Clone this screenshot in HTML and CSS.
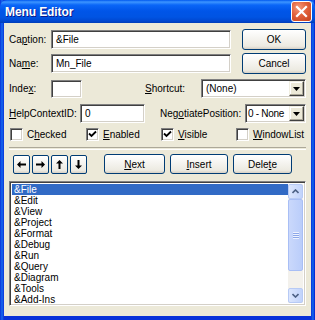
FILE: index.html
```html
<!DOCTYPE html>
<html>
<head>
<meta charset="utf-8">
<link rel="stylesheet" href="styles.css">
</head>
<body>
<div class="win">
  <div class="titlebar">
    <span class="title">Menu Editor</span>
    <span class="close"><svg width="21" height="21" viewBox="0 0 21 21"><path d="M6 6 L15 15 M15 6 L6 15" stroke="#fff" stroke-width="2.2" stroke-linecap="square"/></svg></span>
  </div>
  <div class="client">
    <div class="row r1">
      <span class="lbl w42">Ca<u>p</u>tion:</span>
      <span class="field fw180">&amp;File</span>
      <span class="btn bw64 push">OK</span>
    </div>
    <div class="row r2">
      <span class="lbl w42">Na<u>m</u>e:</span>
      <span class="field fw180">Mn_File</span>
      <span class="btn bw64 push">Cancel</span>
    </div>
    <div class="row r3">
      <span class="lbl w42">Inde<u>x</u>:</span>
      <span class="field fw31"></span>
      <span class="lbl w56 ml63"><u>S</u>hortcut:</span>
      <span class="combo cw105"><span class="ctext">(None)</span><span class="drop"><svg width="7" height="4" viewBox="0 0 7 4"><path d="M0 0 H7 L3.5 4 Z" fill="#000"/></svg></span></span>
    </div>
    <div class="row r4">
      <span class="lbl w71"><u>H</u>elpContextID:</span>
      <span class="field fw65">0</span>
      <span class="lbl w85 ml15">Neg<u>o</u>tiatePosition:</span>
      <span class="combo cw61"><span class="ctext tight">0 - None</span><span class="drop"><svg width="7" height="4" viewBox="0 0 7 4"><path d="M0 0 H7 L3.5 4 Z" fill="#000"/></svg></span></span>
    </div>
    <div class="row r5">
      <span class="chk cw76"><span class="box"></span><span>C<u>h</u>ecked</span></span>
      <span class="chk cw75"><span class="box"><svg width="9" height="9" viewBox="0 0 9 9"><path d="M1 3.5 L3.5 6 L8 1.5" fill="none" stroke="#000" stroke-width="1.8"/></svg></span><span><u>E</u>nabled</span></span>
      <span class="chk cw75"><span class="box"><svg width="9" height="9" viewBox="0 0 9 9"><path d="M1 3.5 L3.5 6 L8 1.5" fill="none" stroke="#000" stroke-width="1.8"/></svg></span><span><u>V</u>isible</span></span>
      <span class="chk"><span class="box"></span><span><u>W</u>indowList</span></span>
    </div>
    <div class="sep"></div>
    <div class="row r6">
      <div class="arrows">
        <span class="btn abtn"><svg width="9" height="7" viewBox="0 0 9 7"><path d="M0 3.5 L3.5 0 V2.5 H9 V4.5 H3.5 V7 Z" fill="#000"/></svg></span>
        <span class="btn abtn"><svg width="9" height="7" viewBox="0 0 9 7"><path d="M9 3.5 L5.5 0 V2.5 H0 V4.5 H5.5 V7 Z" fill="#000"/></svg></span>
        <span class="btn abtn"><svg width="7" height="9" viewBox="0 0 7 9"><path d="M3.5 0 L7 3.5 H4.5 V9 H2.5 V3.5 H0 Z" fill="#000"/></svg></span>
        <span class="btn abtn"><svg width="7" height="9" viewBox="0 0 7 9"><path d="M3.5 9 L7 5.5 H4.5 V0 H2.5 V5.5 H0 Z" fill="#000"/></svg></span>
      </div>
      <div class="actions">
        <span class="btn bw61"><u>N</u>ext</span>
        <span class="btn bw58"><u>I</u>nsert</span>
        <span class="btn bw59">Dele<u>t</u>e</span>
      </div>
    </div>
    <div class="list">
      <div class="items">
        <div class="item sel">&amp;File</div>
        <div class="item">&amp;Edit</div>
        <div class="item">&amp;View</div>
        <div class="item">&amp;Project</div>
        <div class="item">&amp;Format</div>
        <div class="item">&amp;Debug</div>
        <div class="item">&amp;Run</div>
        <div class="item">&amp;Query</div>
        <div class="item">&amp;Diagram</div>
        <div class="item">&amp;Tools</div>
        <div class="item">&amp;Add-Ins</div>
      </div>
      <div class="vscroll">
        <span class="sbtn"><svg width="7" height="5" viewBox="0 0 7 5"><path d="M0.5 4 L3.5 1 L6.5 4" fill="none" stroke="#4D6185" stroke-width="1.6"/></svg></span>
        <span class="thumb"><span class="grip"></span></span>
        <span class="track"></span>
        <span class="sbtn"><svg width="7" height="5" viewBox="0 0 7 5"><path d="M0.5 1 L3.5 4 L6.5 1" fill="none" stroke="#4D6185" stroke-width="1.6"/></svg></span>
      </div>
    </div>
  </div>
</div>
</body>
</html>
```

FILE: styles.css
```css
html, body {
  margin: 0;
  padding: 0;
  background: #fff;
}
.win {
  width: 315px;
  height: 320px;
  box-sizing: border-box;
  display: flex;
  flex-direction: column;
  background: linear-gradient(to right, #0831D9 0, #166AEE 2px, #0831D9 4px, #0831D9 311px, #166AEE 313px, #0019CF 315px);
  font-family: "Liberation Sans", Arial, sans-serif;
  font-size: 10px;
  color: #000;
}
.titlebar {
  position: relative;
  height: 23px;
  flex: none;
  display: flex;
  align-items: center;
  padding-left: 5px;
  border-radius: 7px 7px 0 0;
  background: linear-gradient(to bottom, #0058EE 0, #3D95FF 2px, #0A66F7 5px, #0055E8 11px, #0054E3 17px, #0047D0 21px, #003DB8 23px);
}
.title {
  color: #fff;
  font-weight: bold;
  font-size: 12px;
  letter-spacing: -0.1px;
  text-shadow: 1px 1px 0 #0A1A8C;
}
.close {
  position: absolute;
  right: 3px;
  top: 1px;
  width: 21px;
  height: 21px;
  box-sizing: border-box;
  border: 1px solid #fff;
  border-radius: 3px;
  background: radial-gradient(circle at 35% 30%, #F49A7C 0, #E2613B 45%, #C4411C 100%);
  display: flex;
}
.close svg { margin: -1px; }
.client {
  flex: 1;
  margin: 0 4px 4px 4px;
  background: #ECE9D8;
  padding: 6px 5px 0 5px;
  display: flex;
  flex-direction: column;
}
.row {
  display: flex;
  align-items: center;
}
.r1 { height: 21px; }
.r2 { height: 21px; margin-top: 3px; }
.r3 { height: 19px; margin-top: 5px; }
.r4 { height: 19px; margin-top: 6px; }
.r5 { height: 14px; margin-top: 4px; }
.r6 { height: 20px; margin-top: 4px; }
.lbl { flex: none; white-space: nowrap; }
.w42 { width: 42px; }
.w56 { width: 56px; }
.w71 { width: 71px; }
.w85 { width: 85px; }
.ml63 { margin-left: 63px; }
.ml15 { margin-left: 15px; }
.field {
  flex: none;
  height: 19px;
  box-sizing: border-box;
  background: #fff;
  border-top: 1px solid #808080;
  border-left: 1px solid #808080;
  border-right: 1px solid #fff;
  border-bottom: 1px solid #fff;
  box-shadow: inset 1px 1px 0 #404040, inset -1px -1px 0 #D4D0C8;
  padding: 0 4px;
  line-height: 17px;
}
.fw180 { width: 180px; }
.fw31 { width: 31px; height: 18px; }
.fw65 { width: 65px; }
.combo {
  flex: none;
  height: 19px;
  box-sizing: border-box;
  background: #fff;
  border-top: 1px solid #808080;
  border-left: 1px solid #808080;
  border-right: 1px solid #fff;
  border-bottom: 1px solid #fff;
  box-shadow: inset 1px 1px 0 #404040, inset -1px -1px 0 #D4D0C8;
  padding: 1px;
  display: flex;
}
.cw105 { width: 105px; }
.cw61 { width: 61px; }
.ctext {
  flex: 1;
  padding-left: 3px;
  line-height: 15px;
  white-space: nowrap;
  overflow: hidden;
}
.tight { padding-left: 1px; letter-spacing: -0.3px; }
.drop {
  width: 15px;
  flex: none;
  box-sizing: border-box;
  background: #ECE9D8;
  border-top: 1px solid #F1EFE2;
  border-left: 1px solid #F1EFE2;
  border-right: 1px solid #404040;
  border-bottom: 1px solid #404040;
  box-shadow: inset -1px -1px 0 #ACA899, inset 1px 1px 0 #fff;
  display: flex;
  align-items: center;
  justify-content: center;
}
.btn {
  flex: none;
  height: 20px;
  box-sizing: border-box;
  border: 1px solid #003C74;
  border-radius: 3px;
  background: linear-gradient(to bottom, #FFFFFF 0, #F6F5F1 40%, #ECEAE1 85%, #D6D0C5 100%);
  display: flex;
  align-items: center;
  justify-content: center;
  white-space: nowrap;
}
.push { margin-left: auto; height: 21px; }
.bw64 { width: 64px; }
.bw61 { width: 61px; }
.bw58 { width: 58px; }
.bw59 { width: 59px; }
.chk {
  flex: none;
  display: flex;
  align-items: center;
  gap: 4px;
  white-space: nowrap;
}
.cw76 { width: 76px; }
.cw75 { width: 75px; }
.box {
  width: 13px;
  height: 13px;
  box-sizing: border-box;
  margin-left: 1px;
  background: #fff;
  border-top: 1px solid #808080;
  border-left: 1px solid #808080;
  border-right: 1px solid #fff;
  border-bottom: 1px solid #fff;
  box-shadow: inset 1px 1px 0 #404040, inset -1px -1px 0 #D4D0C8;
  display: flex;
  align-items: center;
  justify-content: center;
}
.sep {
  margin-top: 6px;
  height: 1px;
  border-top: 1px solid #ACA899;
  border-bottom: 1px solid #fff;
}
.r6 { padding-left: 4px; }
.arrows { display: flex; gap: 2px; }
.abtn { width: 17px; height: 19px; border-radius: 2px; }
.actions { display: flex; gap: 5px; margin-left: 17px; }
.list {
  margin-top: 7px;
  height: 125px;
  box-sizing: border-box;
  background: #fff;
  border-top: 1px solid #808080;
  border-left: 1px solid #808080;
  border-right: 1px solid #fff;
  border-bottom: 1px solid #fff;
  box-shadow: inset 1px 1px 0 #404040, inset -1px -1px 0 #D4D0C8;
  padding: 2px 2px 2px 2px;
  display: flex;
}
.items { flex: 1; }
.item {
  height: 11px;
  line-height: 11px;
  padding-left: 2px;
}
.sel { background: #316AC5; color: #fff; }
.vscroll {
  width: 15px;
  flex: none;
  display: flex;
  flex-direction: column;
  background: #F3F1EC;
}
.sbtn {
  height: 15px;
  flex: none;
  box-sizing: border-box;
  border: 1px solid #B7CAF5;
  border-radius: 2px;
  background: linear-gradient(to right, #DCE6FD, #C1D3FB);
  display: flex;
  align-items: center;
  justify-content: center;
}
.thumb {
  height: 72px;
  flex: none;
  box-sizing: border-box;
  border: 1px solid #A8BEF5;
  border-radius: 2px;
  background: linear-gradient(to right, #CAD8FB, #BACDFA);
  display: flex;
  align-items: center;
  justify-content: center;
}
.grip {
  width: 6px;
  height: 7px;
  background: repeating-linear-gradient(to bottom, #EEF3FE 0, #EEF3FE 1px, #8CA7E9 1px, #8CA7E9 2px);
}
.track { flex: 1; }
```
